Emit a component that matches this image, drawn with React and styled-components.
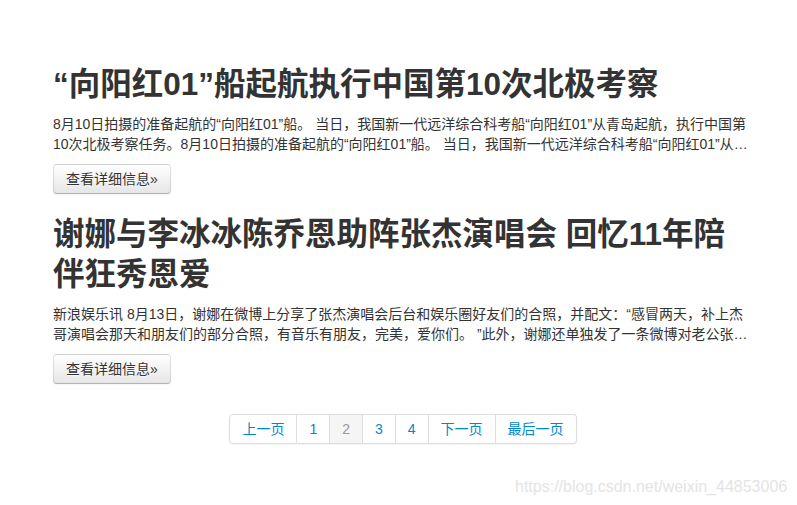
import React from "react";
import styled, { createGlobalStyle } from "styled-components";

const Global = createGlobalStyle`
  html, body { margin: 0; padding: 0; background: #fff; }
  body {
    font-family: "Liberation Sans", "Noto Sans CJK SC", sans-serif;
    font-size: 14px;
    line-height: 20px;
    color: #333;
  }
`;

const Page = styled.div`
  position: relative;
  width: 797px;
  min-height: 505px;
  box-sizing: border-box;
  padding: 54px 0 20px 53px;
`;

const Container = styled.div`
  width: 700px;
  display: flex;
  flex-direction: column;
`;

const Article = styled.article`
  display: flex;
  flex-direction: column;
`;

const Title = styled.h2`
  margin: 10px 0;
  font-size: 31.5px;
  line-height: 40px;
  font-weight: bold;
  color: #333;
  text-rendering: optimizeLegibility;
`;

const Summary = styled.p`
  margin: 0 0 10px;
  font-size: 14px;
  line-height: 20px;
  display: -webkit-box;
  -webkit-box-orient: vertical;
  -webkit-line-clamp: 2;
  overflow: hidden;
`;

const ButtonRow = styled.p`
  margin: 0 0 10px;
  display: flex;
  height: 30px;
`;

const Button = styled.a`
  display: inline-block;
  box-sizing: border-box;
  height: 30px;
  padding: 4px 12px;
  font-size: 14px;
  line-height: 20px;
  color: #333;
  text-decoration: none;
  text-shadow: 0 1px 1px rgba(255, 255, 255, 0.75);
  background-color: #f5f5f5;
  background-image: linear-gradient(to bottom, #ffffff, #e6e6e6);
  border: 1px solid #cccccc;
  border-color: rgba(0, 0, 0, 0.1) rgba(0, 0, 0, 0.1) rgba(0, 0, 0, 0.25);
  border-bottom-color: #b3b3b3;
  border-radius: 4px;
  box-shadow: inset 0 1px 0 rgba(255, 255, 255, 0.2), 0 1px 2px rgba(0, 0, 0, 0.05);
  cursor: pointer;
`;

const Pagination = styled.ul`
  margin: 20px 0;
  padding: 0;
  list-style: none;
  display: flex;
  justify-content: center;
`;

const PageList = styled.div`
  display: flex;
  border-radius: 4px;
  box-shadow: 0 1px 2px rgba(0, 0, 0, 0.05);
`;

const PageItem = styled.a`
  display: block;
  padding: 4px 12px;
  line-height: 20px;
  font-size: 14px;
  text-decoration: none;
  color: ${(p) => (p.$active ? "#999999" : "#0088cc")};
  background: ${(p) => (p.$active ? "#f5f5f5" : "#ffffff")};
  border: 1px solid #dddddd;
  border-left-width: 0;
  &:first-child {
    border-left-width: 1px;
    border-radius: 4px 0 0 4px;
  }
  &:last-child {
    border-radius: 0 4px 4px 0;
  }
`;

const Watermark = styled.div`
  position: absolute;
  left: 515px;
  top: 478px;
  font-family: "Liberation Sans", Arial, sans-serif;
  font-size: 16px;
  line-height: 18px;
  color: #e4e4e4;
  white-space: nowrap;
  pointer-events: none;
`;

const articles = [
  {
    title: "“向阳红01”船起航执行中国第10次北极考察",
    summary:
      "8月10日拍摄的准备起航的“向阳红01”船。 当日，我国新一代远洋综合科考船“向阳红01”从青岛起航，执行中国第10次北极考察任务。8月10日拍摄的准备起航的“向阳红01”船。 当日，我国新一代远洋综合科考船“向阳红01”从青岛起航，执行中国第10次北极考察任务。",
  },
  {
    title: "谢娜与李冰冰陈乔恩助阵张杰演唱会 回忆11年陪伴狂秀恩爱",
    summary:
      "新浪娱乐讯 8月13日，谢娜在微博上分享了张杰演唱会后台和娱乐圈好友们的合照，并配文：“感冒两天，补上杰哥演唱会那天和朋友们的部分合照，有音乐有朋友，完美，爱你们。 ”此外，谢娜还单独发了一条微博对老公张杰表白，回忆两人相识相恋的11年时光。",
  },
];

const pages = [
  { label: "上一页" },
  { label: "1" },
  { label: "2", active: true },
  { label: "3" },
  { label: "4" },
  { label: "下一页" },
  { label: "最后一页" },
];

export default function App() {
  return (
    <>
      <Global />
      <Page>
        <Container>
          {articles.map((a, i) => (
            <Article key={i}>
              <Title>{a.title}</Title>
              <Summary>{a.summary}</Summary>
              <ButtonRow>
                <Button href="#">查看详细信息»</Button>
              </ButtonRow>
            </Article>
          ))}
          <Pagination>
            <PageList>
              {pages.map((p) => (
                <PageItem key={p.label} href="#" $active={p.active}>
                  {p.label}
                </PageItem>
              ))}
            </PageList>
          </Pagination>
        </Container>
        <Watermark>https://blog.csdn.net/weixin_44853006</Watermark>
      </Page>
    </>
  );
}
